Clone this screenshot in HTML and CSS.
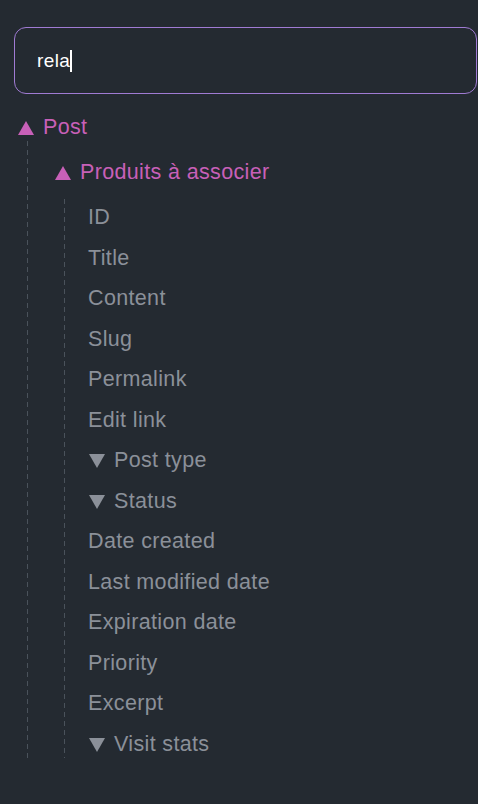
FILE: index.html
```html
<!DOCTYPE html>
<html lang="fr">
<head>
<meta charset="utf-8">
<link rel="stylesheet" href="styles.css">
</head>
<body>
<div class="panel">
  <div class="search"><span class="query">rela</span><span class="caret"></span></div>
  <div class="tree">
    <div class="row group"><svg class="tri" viewBox="0 0 16 14"><path d="M8 0L16 14H0Z"/></svg>Post</div>
    <div class="children">
      <div class="row group"><svg class="tri" viewBox="0 0 16 14"><path d="M8 0L16 14H0Z"/></svg>Produits à associer</div>
      <div class="children inner">
        <div class="row">ID</div>
        <div class="row">Title</div>
        <div class="row">Content</div>
        <div class="row">Slug</div>
        <div class="row">Permalink</div>
        <div class="row">Edit link</div>
        <div class="row"><svg class="tri" viewBox="0 0 16 14"><path d="M0 0H16L8 14Z"/></svg>Post type</div>
        <div class="row"><svg class="tri" viewBox="0 0 16 14"><path d="M0 0H16L8 14Z"/></svg>Status</div>
        <div class="row">Date created</div>
        <div class="row">Last modified date</div>
        <div class="row">Expiration date</div>
        <div class="row">Priority</div>
        <div class="row">Excerpt</div>
        <div class="row"><svg class="tri" viewBox="0 0 16 14"><path d="M0 0H16L8 14Z"/></svg>Visit stats</div>
      </div>
    </div>
  </div>
</div>
</body>
</html>
```
FILE: styles.css
```css
html, body {
  margin: 0;
  padding: 0;
  background: #242a31;
}
body {
  font-family: "Liberation Sans", Arial, sans-serif;
}
.panel {
  padding: 27px 1px 0 14px;
}
.search {
  box-sizing: border-box;
  height: 67px;
  border: 1px solid #a07bd3;
  border-radius: 12px;
  padding-left: 22px;
  display: flex;
  align-items: center;
  color: #ffffff;
  font-size: 19px;
  letter-spacing: 0.4px;
}
.caret {
  display: inline-block;
  width: 1.5px;
  height: 22px;
  background: #ffffff;
}
.tree {
  margin-top: 19px;
  padding-left: 3px;
  display: flex;
  flex-direction: column;
}
.row {
  line-height: 28px;
  font-size: 21.5px;
  letter-spacing: 0.35px;
  color: #8b9099;
  white-space: nowrap;
  fill: #8b9099;
}
.row.group {
  color: #c860b8;
  fill: #c860b8;
}
.tri {
  width: 16px;
  height: 14px;
  margin: 0 9px 0 1px;
  vertical-align: -1px;
}
.children {
  margin-left: 10px;
  padding: 17px 0 0 27px;
  display: flex;
  flex-direction: column;
  gap: 12.5px;
  background-image: linear-gradient(#4a525b 55%, transparent 55%);
  background-size: 1px 9px;
  background-repeat: repeat-y;
  background-position: 0 0;
}
.children.inner {
  padding-top: 4.5px;
  padding-left: 24px;
}
```
